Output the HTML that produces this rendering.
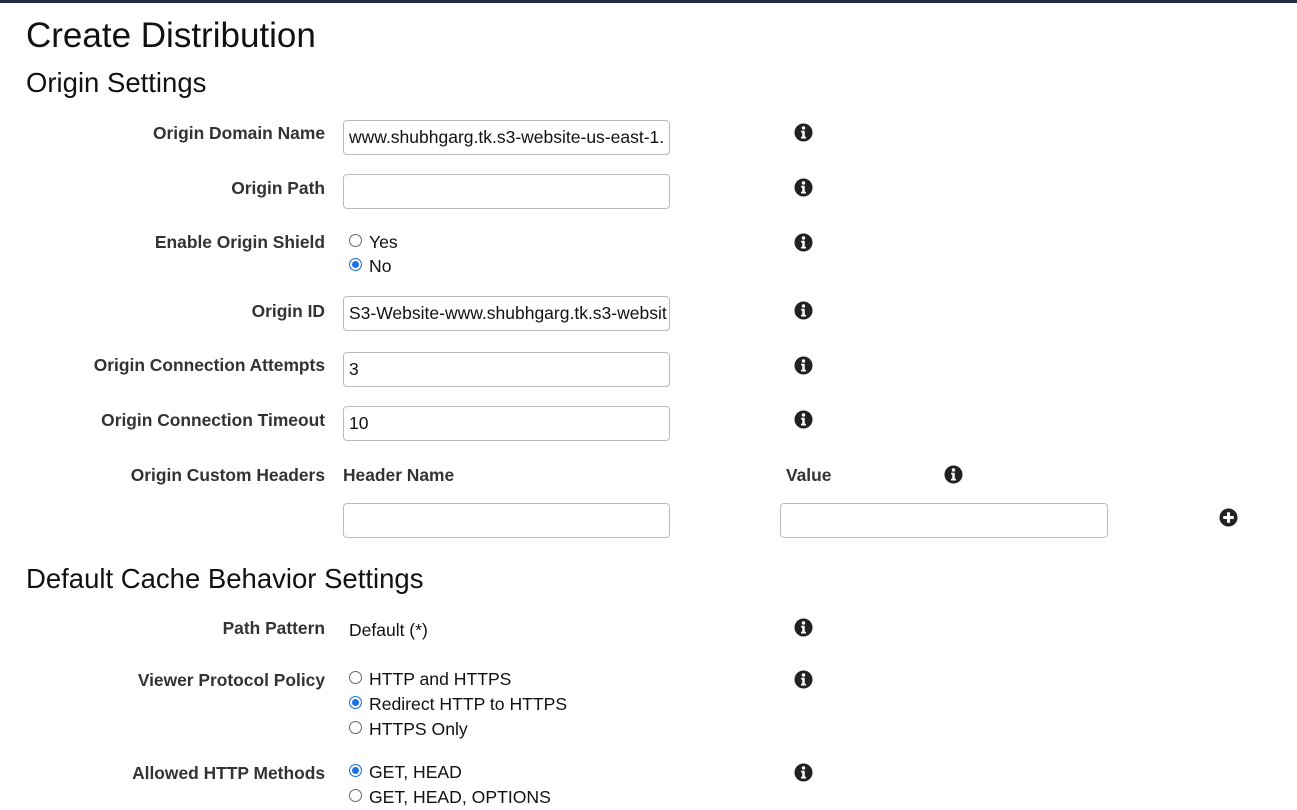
<!DOCTYPE html>
<html><head><meta charset="utf-8"><style>
body{margin:0;width:1297px;height:810px;overflow:hidden;background:#fff;font-family:"Liberation Sans",Arial,sans-serif;color:#111;position:relative}
.top{position:absolute;left:0;top:0;width:1297px;height:3px;background:#232f3e}
.h{position:absolute;left:26px;font-weight:normal;color:#111;white-space:nowrap}
.l{position:absolute;right:972px;font-weight:bold;font-size:17.4px;line-height:18px;color:#333;white-space:nowrap;text-align:right}
.in{position:absolute;left:343px;width:327px;height:35px;border:1px solid #bbb;border-radius:4px;box-sizing:border-box;font-size:17.5px;line-height:33px;padding-left:5px;overflow:hidden;white-space:nowrap;color:#111}
.r{position:absolute;left:349px;font-size:17.6px;line-height:18px;white-space:nowrap;color:#111}
.r i{display:inline-block;width:11px;height:11px;border:1px solid #666;border-radius:50%;margin-right:7px;box-sizing:content-box;position:relative;top:-1px}
.r i.on{border:1px solid #1a73e8;background:#1a73e8;box-shadow:inset 0 0 0 2px #fff}
.ic{position:absolute;width:19px;height:19px}
.t{position:absolute;font-size:17.5px;line-height:18px;white-space:nowrap}
.b{font-weight:bold;color:#333}
</style></head><body>
<div class="top"></div>
<div class="h" style="top:17px;font-size:35px;line-height:38px">Create Distribution</div>
<div class="h" style="top:68px;font-size:27.5px;line-height:30px">Origin Settings</div>

<div class="l" style="top:124px">Origin Domain Name</div>
<div class="in" style="top:120px">www.shubhgarg.tk.s3-website-us-east-1.</div>
<div class="l" style="top:179px">Origin Path</div>
<div class="in" style="top:174px"></div>
<div class="l" style="top:233px">Enable Origin Shield</div>
<div class="r" style="top:233px"><i></i>Yes</div>
<div class="r" style="top:257px"><i class="on"></i>No</div>
<div class="l" style="top:302px">Origin ID</div>
<div class="in" style="top:296px">S3-Website-www.shubhgarg.tk.s3-websit</div>
<div class="l" style="top:356px">Origin Connection Attempts</div>
<div class="in" style="top:352px">3</div>
<div class="l" style="top:411px">Origin Connection Timeout</div>
<div class="in" style="top:406px">10</div>
<div class="l" style="top:466px">Origin Custom Headers</div>
<div class="t b" style="left:343px;top:466px;font-size:17.4px">Header Name</div>
<div class="t b" style="left:786px;top:466px;font-size:17.4px">Value</div>
<div class="in" style="top:503px"></div>
<div class="in" style="top:503px;left:780px;width:328px"></div>

<div class="h" style="top:564px;font-size:27.5px;line-height:30px">Default Cache Behavior Settings</div>
<div class="l" style="top:619px">Path Pattern</div>
<div class="t" style="left:349px;top:621px">Default (*)</div>
<div class="l" style="top:671px">Viewer Protocol Policy</div>
<div class="r" style="top:670px"><i></i>HTTP and HTTPS</div>
<div class="r" style="top:695px"><i class="on"></i>Redirect HTTP to HTTPS</div>
<div class="r" style="top:720px"><i></i>HTTPS Only</div>
<div class="l" style="top:764px">Allowed HTTP Methods</div>
<div class="r" style="top:763px"><i class="on"></i>GET, HEAD</div>
<div class="r" style="top:788px"><i></i>GET, HEAD, OPTIONS</div>

<svg width="0" height="0" style="position:absolute"><defs>
<symbol id="info" viewBox="0 0 20 20"><circle cx="10" cy="10" r="9.5" fill="#222"/><circle cx="10" cy="5.2" r="1.8" fill="#fff"/><path d="M7.5 8.2h3.8v6.3h1.3v1.8H7.4v-1.8h1.3v-4.5H7.5z" fill="#fff"/></symbol>
<symbol id="plus" viewBox="0 0 20 20"><circle cx="10" cy="10" r="9.5" fill="#222"/><path d="M8.4 4.5h3.2v3.9h3.9v3.2h-3.9v3.9H8.4v-3.9H4.5V8.4h3.9z" fill="#fff"/></symbol>
</defs></svg>
<svg class="ic" style="left:794px;top:123px"><use href="#info"/></svg>
<svg class="ic" style="left:794px;top:178px"><use href="#info"/></svg>
<svg class="ic" style="left:794px;top:233px"><use href="#info"/></svg>
<svg class="ic" style="left:794px;top:301px"><use href="#info"/></svg>
<svg class="ic" style="left:794px;top:356px"><use href="#info"/></svg>
<svg class="ic" style="left:794px;top:410px"><use href="#info"/></svg>
<svg class="ic" style="left:944px;top:465px"><use href="#info"/></svg>
<svg class="ic" style="left:1219px;top:508px"><use href="#plus"/></svg>
<svg class="ic" style="left:794px;top:618px"><use href="#info"/></svg>
<svg class="ic" style="left:794px;top:670px"><use href="#info"/></svg>
<svg class="ic" style="left:794px;top:763px"><use href="#info"/></svg>
</body></html>
